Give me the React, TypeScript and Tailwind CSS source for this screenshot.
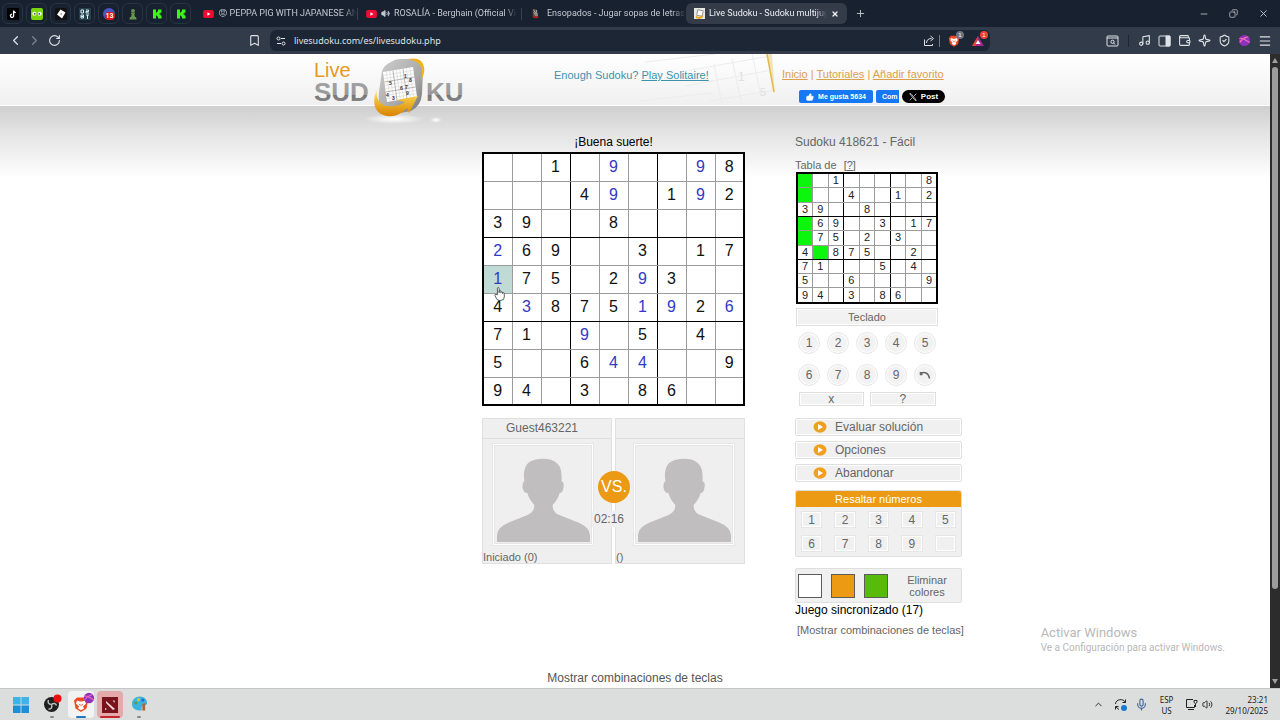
import { useState } from 'react'
import type { ReactNode } from 'react'
import {
  Bookmark, ChevronLeft, ChevronRight, ChevronUp, Copy, Menu, Mic, Minus, Music, Plus,
  RotateCw, ShieldCheck, Sparkle, ThumbsUp, Volume2, Wallet, X,
} from 'lucide-react'

// given digits of the puzzle, one string per row
const GIVEN = [
  '..1.....8',
  '...4..1.2',
  '39..8....',
  '.69..3.17',
  '.75.2.3..',
  '4.875..2.',
  '71...5.4.',
  '5..6....9',
  '94.3.86..',
]

// digits typed by the player
const PLAYED = [
  '....9..9.',
  '....9..9.',
  '.........',
  '2........',
  '1....9...',
  '.3...19.6',
  '...9.....',
  '....44...',
  '.........',
]

const SOLVED_CELLS = ['0-0', '1-0', '3-0', '4-0', '5-1']
const DIGITS = [1, 2, 3, 4, 5, 6, 7, 8, 9]

function cellBorders(r: number, c: number) {
  return `${c === 2 || c === 5 ? 'border-r border-r-black' : 'border-r border-r-[#9c9c9c]'} ${
    r === 2 || r === 5 ? 'border-b border-b-black' : 'border-b border-b-[#9c9c9c]'
  }`
}

/* ---------- browser chrome ---------- */

function YouTubeIcon() {
  return (
    <svg viewBox="0 0 12 9" className="w-[11px] h-2 shrink-0">
      <rect width="12" height="9" rx="2" fill="#f00b33" />
      <path d="M4.7 2.4v4.2l3.6-2.1z" fill="#fff" />
    </svg>
  )
}

function KickIcon() {
  return (
    <svg viewBox="0 0 12 12" className="w-3 h-3">
      <path d="M2 1.500h3v3h1v-1h1v-2h3.500v3h-1v1h-1v1h1v1h1v3H7v-2H6v-1H5v3H2z" fill="#3df51a" />
    </svg>
  )
}

const PINNED: { name: string; icon: ReactNode }[] = [
  {
    name: 'TikTok',
    icon: (
      <svg viewBox="0 0 12 12" className="w-3 h-3">
        <rect width="12" height="12" rx="1" fill="#000" />
        <path d="M6.6 2.500v5.200a1.600 1.600 0 1 1-1.600-1.500M6.600 2.600c.2 1.300 1 1.900 2.200 2" fill="none" stroke="#fff" strokeWidth="1.300" />
      </svg>
    ),
  },
  {
    name: 'Duolingo',
    icon: (
      <svg viewBox="0 0 12 12" className="w-3 h-3">
        <rect width="12" height="12" rx="2" fill="#78d60b" />
        <circle cx="3.300" cy="5.800" r="2" fill="#fff" />
        <circle cx="8.700" cy="5.800" r="2" fill="#fff" />
        <circle cx="3.700" cy="5.800" r=".9" fill="#445" />
        <circle cx="8.300" cy="5.800" r=".9" fill="#445" />
        <path d="M5 7.500h2l-1 1.600z" fill="#f5b80c" />
      </svg>
    ),
  },
  {
    name: 'Git',
    icon: (
      <svg viewBox="0 0 12 12" className="w-3 h-3">
        <rect width="12" height="12" rx="2" fill="#111" />
        <path d="M5.500 1.500l5 3-3.500 6-5-4z" fill="#fff" />
        <circle cx="6.200" cy="6" r=".8" fill="#777" />
      </svg>
    ),
  },
  {
    name: 'Letras',
    icon: (
      <svg viewBox="0 0 12 12" className="w-3 h-3">
        <rect width="12" height="12" rx="1" fill="#24424d" />
        <path d="M2 2h2.500v3H2zM7 2h2.500v1.500H7V5h3M2 7h2.500v3H2zM2 8.500h2.500M7 7h3M8.500 7v4" fill="none" stroke="#dcecef" />
      </svg>
    ),
  },
  {
    name: 'Notificaciones',
    icon: (
      <span className="relative flex w-3 h-3 rounded-full bg-[#4b57b9]">
        <span className="absolute left-0.5 top-1 px-px rounded-sm bg-[#e01420] text-white text-[7px] leading-[8px] font-bold">13</span>
      </span>
    ),
  },
  {
    name: 'Chess',
    icon: (
      <svg viewBox="0 0 12 12" className="w-3 h-3" fill="#67974c">
        <circle cx="6" cy="2.800" r="1.900" />
        <path d="M4 4.700h4v1H7.200L8 9H4l.8-3.300H4zM3 9h6l.6 2.500H2.400z" />
      </svg>
    ),
  },
  { name: 'Kick', icon: <KickIcon /> },
  { name: 'Kick 2', icon: <KickIcon /> },
]

function SudokuFavicon() {
  return (
    <svg viewBox="0 0 12 12" className="w-[11px] h-[11px] shrink-0">
      <rect width="12" height="12" fill="#e9e7e1" />
      <path d="M4 2l6 1-1 6-6-1z" fill="#fff" stroke="#8b8b8b" />
      <path d="M2 8c2 3 5 2 7-1l1 3-4 2-4-1z" fill="#e9a320" />
    </svg>
  )
}

function TabTitle({ children }: { children: ReactNode }) {
  return (
    <span className="flex-1 min-w-0 overflow-hidden whitespace-nowrap text-left mask-r-from-90%">
      {children}
    </span>
  )
}

function TabStrip() {
  return (
    <div className="h-[27px] shrink-0 flex items-center bg-[#18212f] text-[#c3c9d2] text-[9px] font-[Roboto,sans-serif]">
      <div className="flex gap-[3px] pl-0.5 mr-3">
        {PINNED.map((tab) => (
          <button key={tab.name} aria-label={tab.name} className="w-[21px] h-[21px] flex items-center justify-center rounded-md border border-[#2a3341]">
            {tab.icon}
          </button>
        ))}
      </div>
      <button className="w-[154px] flex items-center gap-1">
        <YouTubeIcon />
        <TabTitle><span className="font-['DejaVu_Sans',sans-serif]">😡</span> PEPPA PIG WITH JAPANESE AND E</TabTitle>
      </button>
      <span className="w-px h-3 mr-2 bg-[#36404e]" />
      <button className="w-[151px] flex items-center gap-1">
        <YouTubeIcon />
        <Volume2 size={9} className="shrink-0" fill="currentColor" />
        <TabTitle>ROSALÍA - Berghain (Official Vide</TabTitle>
      </button>
      <span className="w-px h-3 mx-1 bg-[#36404e]" />
      <button className="w-[160px] pl-1 flex items-center gap-1.5">
        <svg viewBox="0 0 12 12" className="w-[11px] h-[11px] shrink-0">
          <path d="M3 1h3l2 5v4H3z" fill="#574c45" />
          <path d="M4 2l3 5M4 5l3 4M7 2l1 7" stroke="#d7d2cb" strokeWidth=".8" />
          <path d="M4 9h5v2H4z" fill="#b61c1c" />
        </svg>
        <TabTitle>Ensopados - Jugar sopas de letras en</TabTitle>
      </button>
      <button className="w-[161px] h-[21px] px-2 flex items-center gap-1 rounded-md bg-[#343c4a] text-[#eef0f3]">
        <SudokuFavicon />
        <TabTitle>Live Sudoku - Sudoku multijugac</TabTitle>
        <X size={8} strokeWidth={4} />
      </button>
      <button aria-label="Nueva pestaña" className="ml-2"><Plus size={11} /></button>
      <div className="ml-auto flex gap-5 pr-[11px]">
        <button aria-label="Minimizar"><Minus size={10} /></button>
        <button aria-label="Restaurar"><Copy size={9} className="-scale-x-100" /></button>
        <button aria-label="Cerrar"><X size={11} /></button>
      </div>
    </div>
  )
}

function BraveIcon({ className }: { className: string }) {
  return (
    <svg viewBox="0 0 16 16" className={className}>
      <path d="M4 1h8l3 3-1.500 8L8 15.500 2.500 12 1 4z" fill="#ef4b23" />
      <path d="M4 4l3 1h2l3-1 1 3-3 3 1 2-3 1.800L5 12l1-2-3-3z" fill="#fff" />
      <path d="M5.500 7l2 1v2zM10.500 7l-2 1v2z" fill="#ef4b23" />
    </svg>
  )
}

function PlanetIcon({ className }: { className: string }) {
  return (
    <svg viewBox="0 0 14 14" className={className}>
      <circle cx="7" cy="7" r="6" fill="#8e32bd" />
      <path d="M1.500 5C4 3 8 7 12.500 9M2 9c3-5 6-5 9-6" fill="none" stroke="#ef6eb4" strokeWidth="1.300" />
    </svg>
  )
}

function Toolbar() {
  return (
    <div className="h-[27px] shrink-0 flex items-center bg-[#323b49] text-[#dfe3e8]">
      <div className="w-[270px] flex items-center pl-2 pr-[9px]">
        <button aria-label="Atrás"><ChevronLeft size={15} /></button>
        <button aria-label="Adelante" className="ml-1 text-[#7d8590]"><ChevronRight size={15} /></button>
        <button aria-label="Recargar" className="ml-1.5"><RotateCw size={13} /></button>
        <button aria-label="Marcador" className="ml-auto"><Bookmark size={13} /></button>
      </div>
      <div className="flex-1 h-[21px] flex items-center gap-2 px-1.5 rounded-md bg-[#1d2634]">
        <svg viewBox="0 0 10 10" className="w-2.5 h-2.5" fill="none" stroke="currentColor">
          <circle cx="2.500" cy="2.500" r="1.500" />
          <circle cx="7.500" cy="7.500" r="1.500" />
          <path d="M5 2.500h4M1 7.500h4" />
        </svg>
        <input
          aria-label="Dirección"
          defaultValue="livesudoku.com/es/livesudoku.php"
          className="flex-1 min-w-0 bg-transparent outline-none text-[9px] font-['Noto_Sans',sans-serif]"
        />
        <button aria-label="Compartir">
          <svg viewBox="0 0 12 12" className="w-3 h-3" fill="none" stroke="currentColor">
            <path d="M1.500 4.500v6h8V9M3.500 8c0-3 2-4.500 5-4.500M7.500 1l3 2.500-3 2.500" />
          </svg>
        </button>
        <span className="w-px h-3 -ml-1 bg-[#727b87]" />
        <button aria-label="Brave Shields" className="relative">
          <BraveIcon className="w-3 h-3" />
          <span className="absolute -top-1 -right-1 w-2 h-2 rounded-full bg-[#6b7380] text-white text-[6px] leading-[8px]">1</span>
        </button>
        <button aria-label="Brave Rewards" className="relative ml-1">
          <svg viewBox="0 0 12 12" className="w-3 h-3">
            <path d="M6 1L0 11h12z" fill="#a2278e" />
            <path d="M6 1L0 11h4z" fill="#e8412a" />
            <path d="M6 5L3.500 9h5z" fill="#fff" />
          </svg>
          <span className="absolute -top-1 -right-1 w-2 h-2 rounded-full bg-[#ee4034] text-white text-[6px] leading-[8px]">1</span>
        </button>
      </div>
      <div className="w-[290px] flex items-center justify-end gap-[7px] pr-2">
        <button aria-label="Buscar en la página">
          <svg viewBox="0 0 13 12" className="w-[13px] h-3" fill="none" stroke="currentColor">
            <rect x="1" y="1" width="11" height="10" rx="1" />
            <path d="M1 3h11M7.700 8L9 9.500" />
            <circle cx="6.500" cy="6.800" r="1.600" />
          </svg>
        </button>
        <span className="w-px h-3 mx-0.5 bg-[#1d2634]" />
        <button aria-label="Música"><Music size={13} /></button>
        <button aria-label="Barra lateral">
          <svg viewBox="0 0 13 12" className="w-[13px] h-3" fill="none" stroke="currentColor">
            <rect x="1" y="1" width="11" height="10" rx="1" />
            <path d="M8 1h4v10H8z" fill="currentColor" />
          </svg>
        </button>
        <button aria-label="Cartera"><Wallet size={13} /></button>
        <button aria-label="Leo"><Sparkle size={13} /></button>
        <button aria-label="VPN"><ShieldCheck size={13} /></button>
        <button aria-label="Perfil"><PlanetIcon className="w-[13px] h-[13px]" /></button>
        <button aria-label="Menú"><Menu size={14} /></button>
      </div>
    </div>
  )
}

/* ---------- site ---------- */

function Logo() {
  return (
    <svg viewBox="0 0 170 72" className="w-[170px] h-[72px] shrink-0 overflow-visible font-['Liberation_Sans',Arial,sans-serif]">
      <defs>
        <linearGradient id="letters" x1="0" y1="0" x2="0" y2="1">
          <stop offset="0" stopColor="#a5a5a5" />
          <stop offset=".6" stopColor="#999" />
          <stop offset=".61" stopColor="#777" />
          <stop offset="1" stopColor="#929292" />
        </linearGradient>
        <linearGradient id="frame" x1="0" y1="0" x2="1" y2="1">
          <stop offset="0" stopColor="#cfcfcf" />
          <stop offset=".6" stopColor="#a8a8a8" />
          <stop offset="1" stopColor="#707070" />
        </linearGradient>
        <linearGradient id="arrow" x1="0" y1="0" x2="0" y2="1">
          <stop offset="0" stopColor="#ffe45a" />
          <stop offset="1" stopColor="#d98200" />
        </linearGradient>
        <radialGradient id="glow">
          <stop offset="0" stopColor="#fff" />
          <stop offset="1" stopColor="#fff" stopOpacity="0" />
        </radialGradient>
      </defs>
      <ellipse cx="89" cy="65" rx="30" ry="5" fill="url(#glow)" />
      <ellipse cx="131" cy="66" rx="6" ry="3" fill="url(#glow)" />
      <text x="9" y="23" fontSize="20" fill="#e89a1c">Live</text>
      <text x="9" y="47" fontSize="26" fontWeight="700" fill="url(#letters)">SUD</text>
      <text x="121" y="47" fontSize="26" fontWeight="700" fill="url(#letters)">KU</text>
      <path d="M86 8q4-3 9-3h12q11 0 11 11l-1 24q-1 12-11 17l-16 3q-12 1-15-8-2-6-1-14l3-21q2-6 9-9z" fill="url(#frame)" />
      <path d="M78 18l30-5 4 30-30 5z" fill="#fdfdfd" />
      <path d="M81.300 17.500l4 30M84.700 17l4 30M91.300 15.800l4 30M94.700 15.200l4 30M101.300 14l4 30M104.700 13.500l4 30M78.500 21.300l30-5M79 24.700l30-5M79.900 31.300l30-5M80.200 34.700l30-5M81 41.300l30-5M81.500 44.700l30-5" stroke="#cfcfcf" strokeWidth=".5" />
      <path d="M88 16.400l4 30M98 14.700l4 30M79.400 28l30-5M80.700 38l30-5" stroke="#9a9a9a" strokeWidth=".7" />
      <g fontSize="5" fontWeight="700" fill="#333">
        <text x="84" y="31">5</text>
        <text x="99" y="24">1</text>
        <text x="104" y="28">8</text>
        <text x="95" y="36">6</text>
        <text x="100" y="35">7</text>
        <text x="81" y="43">4</text>
        <text x="101" y="41">9</text>
        <text x="87" y="46">3</text>
      </g>
      <path d="M103 5c9-2 15 1 16 8 1 5-1 10-3 14 1-8 2-14-3-18q-4-3-10-4z" fill="#f0b41d" />
      <path d="M72 36c-2 9 4 15 10 16 8 1 14-1 18-4l-9-2 22-4-9 17-2-5c-6 6-12 9-20 8-12-2-16-13-10-26z" fill="url(#arrow)" />
    </svg>
  )
}

function HeaderArt() {
  return (
    <svg viewBox="0 0 150 51" className="absolute left-[335px] top-0 w-[150px] h-[51px]" fill="none">
      <path d="M5 8L75 0M40 18l90-16M45 32l87-16M70 47l65-11M74 10l8 41M92 5l9 42M112 0l9 42M0 47l72-8" stroke="#ececec" />
      <text x="98" y="27" fontSize="12" fill="#e0e0e0">1</text>
      <text x="120" y="42" fontSize="11" fill="#e0e0e0">5</text>
      <path d="M127 0h5l3 41z" fill="#f0e4bd" />
      <path d="M127 0l7 38" stroke="#e3b94a" strokeWidth="1.500" />
    </svg>
  )
}

function SiteHeader() {
  return (
    <header className="h-[52px] border-b border-white bg-gradient-to-b from-white to-[#f0f0f0]">
      <div className="relative w-[660px] mx-auto flex items-start">
        <HeaderArt />
        <Logo />
        <p className="relative ml-[79px] mt-3 text-[11px] leading-[18px] text-[#3d93ae]">
          Enough Sudoku? <a href="#solitaire" className="underline">Play Solitaire!</a>
        </p>
        <div className="relative ml-auto w-[183px] mt-3">
          <nav className="text-[11px] leading-[17px] text-[#dca04a] whitespace-nowrap">
            <a href="#inicio" className="underline">Inicio</a> | <a href="#tutoriales" className="underline">Tutoriales</a> | <a href="#favorito" className="underline">Añadir favorito</a>
          </nav>
          <div className="flex gap-[3px] mt-[7px] pl-[17px] text-[7px] leading-[13px] font-bold text-white">
            <button className="h-[13px] w-[74px] flex items-center justify-center gap-1 rounded-xs bg-[#1877f2]">
              <ThumbsUp size={8} fill="currentColor" /> Me gusta 5634
            </button>
            <button className="h-[13px] w-[23px] pl-1.5 overflow-hidden rounded-l-xs bg-[#1877f2] text-left">Com</button>
            <button className="h-[13px] w-[43px] flex items-center justify-center gap-1 rounded-full bg-black text-[8px]">
              <svg viewBox="0 0 12 12" className="w-2 h-2" fill="none" stroke="#fff">
                <path d="M1 1h2l8 10H9zM11 1L7 5.300M5 7l-4 4" />
              </svg>
              Post
            </button>
          </div>
        </div>
      </div>
    </header>
  )
}

function HandCursor() {
  return (
    <svg viewBox="0 0 14 17" className="absolute left-2.5 top-5 z-10 w-3 h-4">
      <path
        d="M4 9.500V2q0-1 1-1t1 1v5V5.500q0-1 1-1t1 1V7q0-1 1-1t1 1v1q0-1 1-1t1 1v4q0 4-4 4H6q-2 0-3-2l-2-4q0-1.500 1.500-1z"
        fill="#fff" stroke="#333" strokeWidth=".9"
      />
    </svg>
  )
}

function MainBoard() {
  return (
    <table className="w-full table-fixed border-collapse border-2 border-black bg-white text-base leading-none text-center">
      <tbody>
        {GIVEN.map((row, r) => (
          <tr key={r} className="h-7">
            {row.split('').map((digit, c) => {
              const played = PLAYED[r][c]
              const selected = r === 4 && c === 0
              return (
                <td
                  key={c}
                  className={`relative p-0 ${cellBorders(r, c)} ${selected ? 'bg-[#c0dad6]' : ''} ${digit === '.' ? 'text-[#3438c4]' : 'text-[#111]'}`}
                >
                  {digit !== '.' ? digit : played !== '.' ? played : ''}
                  {selected && <HandCursor />}
                </td>
              )
            })}
          </tr>
        ))}
      </tbody>
    </table>
  )
}

function MiniBoard() {
  return (
    <table className="w-[142px] h-[132px] ml-px table-fixed border-collapse border-2 border-black bg-white text-[11px] leading-none text-center text-[#222]">
      <tbody>
        {GIVEN.map((row, r) => (
          <tr key={r}>
            {row.split('').map((digit, c) => (
              <td key={c} className={`p-0 ${cellBorders(r, c)} ${SOLVED_CELLS.includes(`${r}-${c}`) ? 'bg-[#0cf50c]' : ''}`}>
                {digit === '.' ? '' : digit}
              </td>
            ))}
          </tr>
        ))}
      </tbody>
    </table>
  )
}

function Avatar() {
  return (
    <div className="w-[102px] h-[103px] p-px border border-[#e6e6e6] bg-white">
      <div className="w-full h-full p-px border border-[#e6e6e6] bg-[#efefef]">
        <svg viewBox="0 0 96 97" className="w-full h-full">
          <path
            d="M1 97v-7q0-8 12-13l18-7q9-4 8-11-5-5-7-12-4 0-5-6 0-5 2-6-2-13 4-19 6-4 15-4 19 0 19 18v5q3 1 2 6-1 6-4 6-2 7-7 12-1 8 8 11l18 7q12 5 12 13v7z"
            fill="#c0bebf"
          />
        </svg>
      </div>
    </div>
  )
}

function Player({ name, status, inset }: { name: string; status: string; inset: string }) {
  return (
    <div className="w-[130px] h-[146px] flex flex-col border border-[#e0e0e0] bg-[#efefef] text-[#666]">
      <div className="h-5 shrink-0 border-b border-[#dedede] pr-2.5 text-center text-xs leading-[18px]">{name}</div>
      <div className={`flex justify-center pt-1 ${inset}`}><Avatar /></div>
      <div className="mt-1 text-[11px] leading-[14px]">{status}</div>
    </div>
  )
}

function Versus() {
  return (
    <section className="relative mt-3 flex justify-between">
      <Player name="Guest463221" status="Iniciado (0)" inset="pr-2" />
      <Player name="" status="()" inset="pl-2" />
      <div className="absolute left-[116px] top-[53px] w-8 h-8 flex items-center justify-center rounded-full bg-[#ec9a14] text-base text-white">VS.</div>
      <div className="absolute left-[110px] top-[93px] w-[34px] text-center bg-[#efefef] text-xs text-[#666]">02:16</div>
    </section>
  )
}

function KeyButton({ children, label }: { children: ReactNode; label?: string }) {
  return (
    <button aria-label={label} className="w-[22px] h-[22px] flex items-center justify-center rounded-full border border-[#e8e8e8] bg-[#f2f2f2] shadow-[inset_0_0_0_1px_#fff] text-xs">
      {children}
    </button>
  )
}

function Keyboard() {
  return (
    <section className="w-[142px] ml-px text-[#666]">
      <button className="block w-full h-[18px] mt-1 border border-[#dfdfdf] bg-[#f2f2f2] shadow-[inset_0_0_0_1px_#fff] text-[11px] leading-4">Teclado</button>
      <div className="grid grid-cols-5 gap-x-[7px] gap-y-[10px] w-[138px] mx-auto mt-[6px]">
        {DIGITS.map((n) => <KeyButton key={n}>{n}</KeyButton>)}
        <KeyButton label="Deshacer">
          <svg viewBox="0 0 12 12" className="w-3 h-3" fill="none" stroke="#666" strokeWidth="1.500">
            <path d="M1.500 4.500c4-2 8-1 9 5M1.500 3v2.500h2" />
          </svg>
        </KeyButton>
      </div>
      <div className="grid grid-cols-2 gap-1.5 w-[137px] mx-auto mt-[6px] text-xs">
        <button className="h-3.5 border border-[#dfdfdf] bg-[#f2f2f2] shadow-[inset_0_0_0_1px_#fff] leading-none">x</button>
        <button className="h-3.5 border border-[#dfdfdf] bg-[#f2f2f2] shadow-[inset_0_0_0_1px_#fff] leading-none">?</button>
      </div>
    </section>
  )
}

function ActionButton({ children }: { children: ReactNode }) {
  return (
    <button className="w-full h-[18px] pl-[17px] flex items-center gap-2 rounded-xs border border-[#dfdfdf] bg-[#f0f0f0] shadow-[inset_0_0_0_1px_#fff] text-xs text-[#666]">
      <svg viewBox="0 0 14 12" className="w-3.5 h-3">
        <ellipse cx="7" cy="6" rx="6.500" ry="5.700" fill="#f0a01c" />
        <path d="M5 3v6l5-3z" fill="#fff" />
      </svg>
      {children}
    </button>
  )
}

const SWATCHES = [
  { name: 'Blanco', bg: 'bg-white' },
  { name: 'Naranja', bg: 'bg-[#ec9a14]' },
  { name: 'Verde', bg: 'bg-[#58bb0c]' },
]

function Sidebar() {
  const [highlighted, setHighlighted] = useState<number | null>(null)

  return (
    <aside className="w-[167px] text-[#666]">
      <h2 className="text-xs leading-5">Sudoku 418621 - Fácil</h2>
      <p className="mt-[6px] text-[11px] leading-[14px]">
        Tabla de <a href="#ayuda" className="ml-1">[<span className="underline">?</span>]</a>
      </p>
      <MiniBoard />
      <Keyboard />
      <div className="flex flex-col gap-[5px] mt-3">
        <ActionButton>Evaluar solución</ActionButton>
        <ActionButton>Opciones</ActionButton>
        <ActionButton>Abandonar</ActionButton>
      </div>
      <section className="mt-2 border border-[#dfdfdf] rounded-xs bg-[#f0f0f0]">
        <h3 className="h-4 rounded-t-xs bg-[#ec9a14] text-center text-[11px] leading-4 text-white">Resaltar números</h3>
        <div className="grid grid-cols-5 gap-x-3 gap-y-[7px] px-[5px] py-1">
          {[...DIGITS, 0].map((n) => (
            <button
              key={n}
              aria-label={n ? undefined : 'Ninguno'}
              onClick={() => setHighlighted(n || null)}
              className={`h-[17px] border border-[#e6e6e6] shadow-[inset_0_0_0_1px_#fff] text-xs leading-none ${highlighted === n ? 'bg-[#ffe2ac]' : 'bg-[#f0f0f0]'}`}
            >
              {n || ''}
            </button>
          ))}
        </div>
      </section>
      <section className="flex items-center gap-[9px] h-[35px] mt-[11px] pl-0.5 border border-[#dfdfdf] rounded-xs bg-[#f0f0f0]">
        {SWATCHES.map((s) => (
          <button key={s.name} aria-label={s.name} className={`w-6 h-6 border border-[#5c5c5c] ${s.bg}`} />
        ))}
        <button className="w-[60px] text-[11px] leading-3">Eliminar colores</button>
      </section>
      <p className="text-xs leading-[14px] text-black">Juego sincronizado (17)</p>
      <button className="block mt-1.5 pl-0.5 text-[11px] leading-[14px] whitespace-nowrap">[Mostrar combinaciones de teclas]</button>
    </aside>
  )
}

function Scrollbar() {
  return (
    <div className="w-[10px] shrink-0 flex flex-col items-center bg-[#2c2c2c] py-1">
      <span className="w-0 h-0 border-x-[3px] border-b-[5px] border-x-transparent border-b-[#a0a0a0]" />
      <span className="w-1.5 h-[522px] mt-1 rounded-full bg-[#9c9c9c]" />
      <span className="w-0 h-0 mt-auto border-x-[3px] border-t-[5px] border-x-transparent border-t-[#a0a0a0]" />
    </div>
  )
}

/* ---------- taskbar ---------- */

function Taskbar() {
  return (
    <footer className="h-8 shrink-0 flex items-center border-t border-[#c4c6c6] bg-[#dcdedd] text-[#222] font-['Noto_Sans',sans-serif]">
      <div className="flex items-center gap-[3px] pl-2">
        <button aria-label="Inicio" className="w-[26px] flex justify-center">
          <svg viewBox="0 0 16 16" className="w-4 h-4" fill="#1c8fd6">
            <path d="M0 0h7.600v7.600H0zM8.400 0H16v7.600H8.400z" fill="#3fb2e8" />
            <path d="M0 8.400h7.600V16H0zM8.400 8.400H16V16H8.400z" />
          </svg>
        </button>
        <button aria-label="OBS" className="w-[26px] h-[27px] ml-0.5 flex flex-col items-center justify-end gap-[3px]">
          <svg viewBox="0 0 18 18" className="w-[18px] h-[18px] overflow-visible">
            <circle cx="8.500" cy="9.500" r="7.500" fill="#1f1f1f" />
            <path d="M8.500 9.500c-3 0-4-2-3-4.500M8.500 9.500c2-2 4.500-1 5 1M8.500 9.500c1 3-.5 5-3 4.500" fill="none" stroke="#bbb" strokeWidth="1.500" />
            <circle cx="14.500" cy="3.500" r="4" fill="#ea1010" />
          </svg>
          <span className="w-1 h-0.5 rounded-full bg-[#888]" />
        </button>
        <button aria-label="Brave" className="w-[26px] h-[27px] flex flex-col items-center justify-end gap-[3px] rounded-sm bg-[#f3f3f3]">
          <span className="relative">
            <BraveIcon className="w-4 h-[17px]" />
            <PlanetIcon className="absolute -top-1 -right-1.5 w-3 h-3" />
          </span>
          <span className="w-2.5 h-0.5 rounded-full bg-[#2377c4]" />
        </button>
        <button aria-label="Dota 2" className="w-[26px] h-[27px] flex flex-col items-center justify-end gap-[3px] rounded-sm bg-[#e4a9ab]">
          <svg viewBox="0 0 16 16" className="w-4 h-4">
            <rect width="16" height="16" fill="#7a141c" />
            <path d="M4 4l9 8-2 1-7-7zM11 3l2 1-1 2zM3 13v-2l2 1z" fill="#ecd9d6" />
          </svg>
          <span className="w-5 h-0.5 rounded-full bg-[#c3252b]" />
        </button>
        <button aria-label="Paint" className="w-[26px] h-[27px] flex flex-col items-center justify-end gap-[3px]">
          <svg viewBox="0 0 18 18" className="w-[17px] h-[18px]">
            <path d="M9 1c5 0 8 3 8 7 0 3-4 2-5 3-2 2 1 5-2 5C4 16 1 13 1 9s3-8 8-8z" fill="#38b4df" />
            <circle cx="5" cy="8" r="1.600" fill="#5ea035" />
            <circle cx="8" cy="4.500" r="1.500" fill="#f3c62b" />
            <circle cx="12.500" cy="5" r="1.500" fill="#2a69bb" />
            <path d="M12 9l3-1v8h-3z" fill="#a5673d" />
          </svg>
          <span className="w-1 h-0.5 rounded-full bg-[#888]" />
        </button>
      </div>
      <div className="ml-auto flex items-center pr-3 text-[8px] leading-[11px]">
        <ChevronUp size={11} />
        <span className="relative ml-2.5">
          <svg viewBox="0 0 13 13" className="w-[13px] h-[13px]" fill="none" stroke="currentColor">
            <path d="M1.500 6c0-5 8-6 10-1.500M11.500 1.500v3h-3M1.500 11.500v-3h3M2 9l3 2.500" />
          </svg>
          <span className="absolute right-0 bottom-0 w-1.5 h-1.5 rounded-full bg-[#1879d0]" />
        </span>
        <Mic size={13} className="ml-2 text-[#3c6297]" />
        <span className="ml-3 flex flex-col items-center"><span>ESP</span><span>US</span></span>
        <svg viewBox="0 0 13 13" className="ml-3 w-[13px] h-[13px]" fill="none" stroke="currentColor">
          <path d="M8 1.500H1.500v8h8V7M3 11.500h6M9 2.500h3v2q-1.500 2-3 0zM10.500 6v3" />
        </svg>
        <Volume2 size={11} className="ml-1" />
        <span className="ml-3 flex flex-col items-end"><span>23:21</span><span>29/10/2025</span></span>
      </div>
    </footer>
  )
}

export default function App() {
  return (
    <div className="min-h-screen flex flex-col font-['Liberation_Sans',Arial,sans-serif]">
      <TabStrip />
      <Toolbar />
      <div className="relative flex-1 flex bg-white">
        <div className="flex-1 min-w-0 bg-white">
          <SiteHeader />
          <main className="bg-[linear-gradient(to_bottom,#cfcfcf_0px,#e2e2e2_25px,#ffffff_72px)]">
            <div className="w-[660px] mx-auto pt-[26px] pl-[177px] flex gap-[50px]">
              <div className="w-[263px]">
                <h1 className="text-xs leading-5 text-center text-black">¡Buena suerte!</h1>
                <MainBoard />
                <Versus />
              </div>
              <Sidebar />
            </div>
            <p className="mt-[31px] text-center text-xs leading-5 text-[#555]">Mostrar combinaciones de teclas</p>
          </main>
        </div>
        <Scrollbar />
        <div className="absolute right-[55px] bottom-[33px] text-[#b8b8b8] font-[Roboto,sans-serif]">
          <p className="text-[13px] leading-4">Activar Windows</p>
          <p className="text-[10px] leading-[14px]">Ve a Configuración para activar Windows.</p>
        </div>
      </div>
      <Taskbar />
    </div>
  )
}
